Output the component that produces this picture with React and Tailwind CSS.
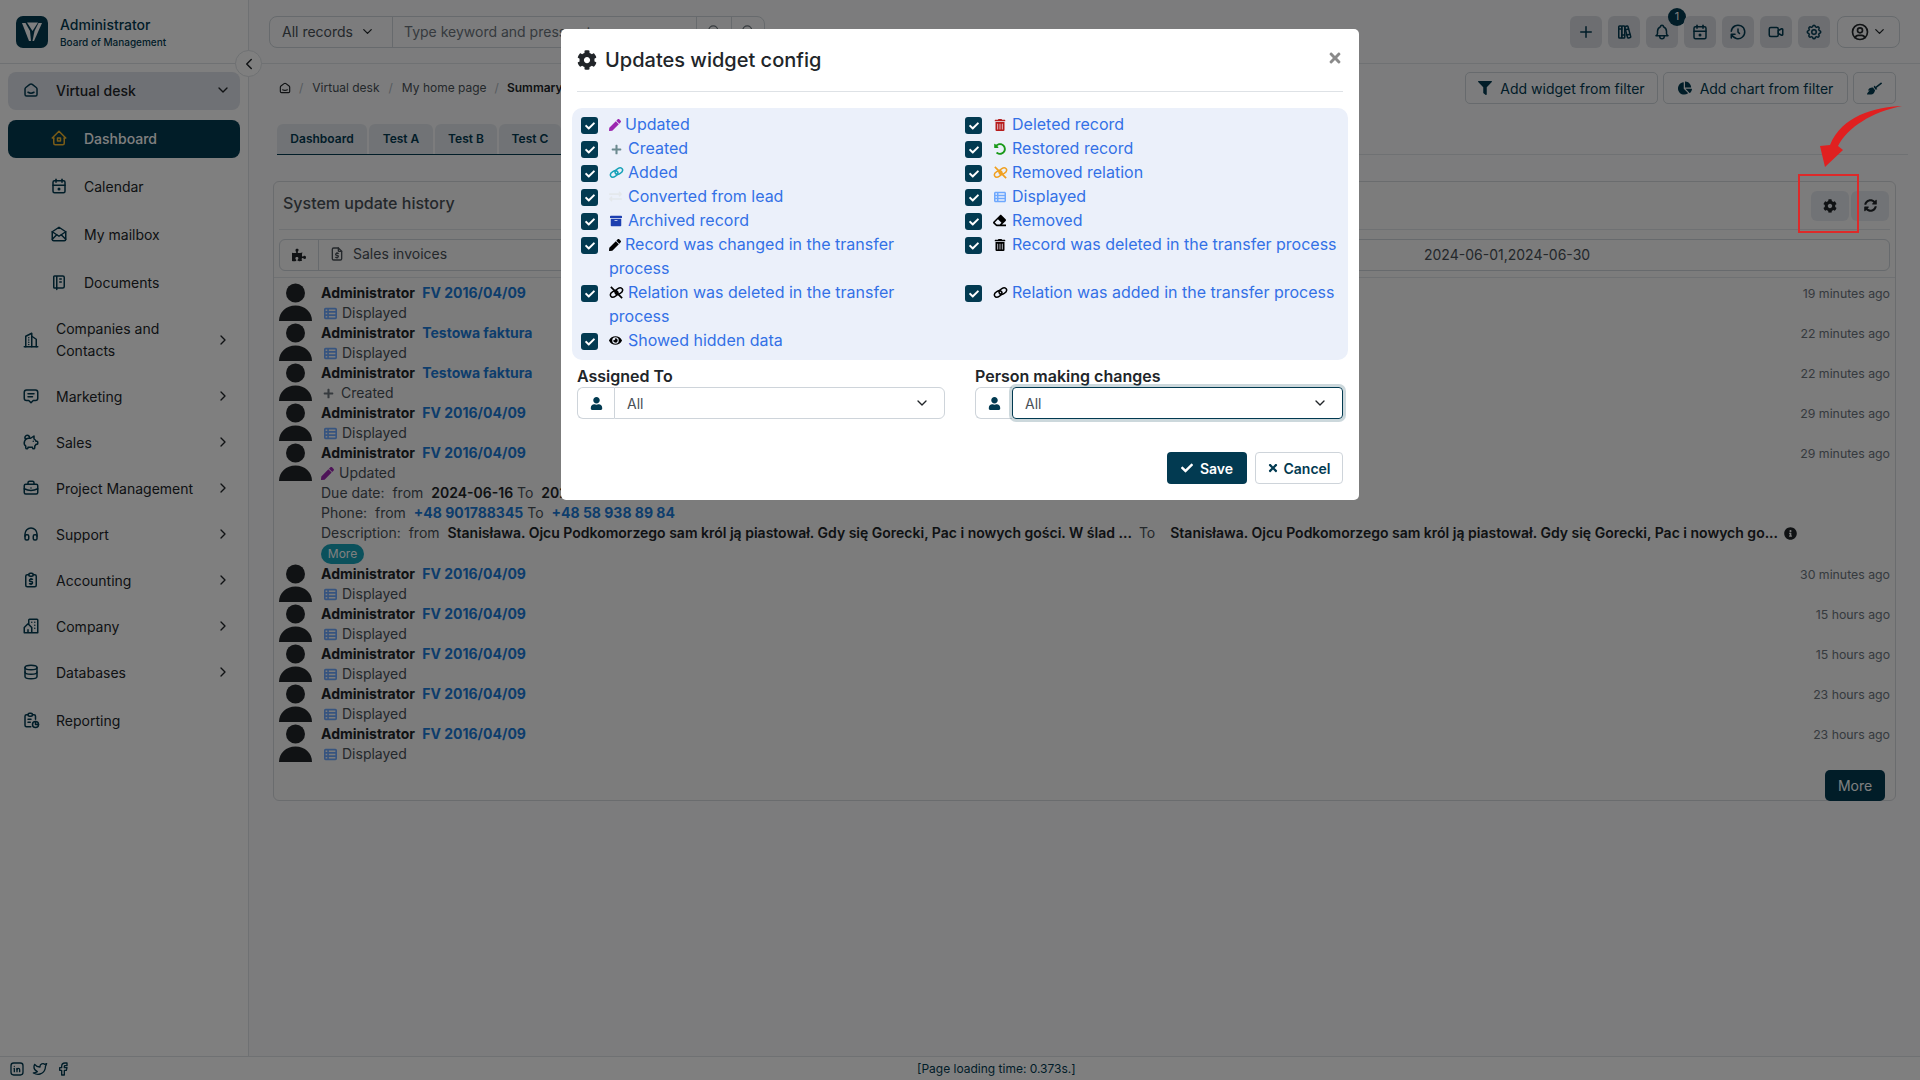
import {
  TbSmartHome, TbHome2, TbCalendarDue, TbMailOpened, TbNotebook, TbBuildingSkyscraper, TbMessage2, TbPigMoney,
  TbBriefcase, TbHeadphones, TbReportMoney, TbBuildingCommunity, TbDatabase, TbReport, TbChevronDown, TbChevronRight,
  TbChevronLeft, TbPlus, TbBooks, TbBell, TbHistory, TbVideo, TbSettings, TbUserCircle, TbSearch, TbFileDollar,
  TbBrandLinkedin, TbBrandTwitter, TbBrandFacebook,
} from 'react-icons/tb';
import {
  FaPen, FaPlus, FaExchangeAlt, FaArchive, FaEye, FaTrashAlt, FaUndoAlt, FaEraser, FaCog, FaFilter,
  FaChartPie, FaBroom, FaSyncAlt, FaInfoCircle, FaUser, FaCheck, FaTimes, FaPuzzlePiece,
} from 'react-icons/fa';
import { FaTableList } from 'react-icons/fa6';

const subItems = [
  { label: 'Calendar', Icon: TbCalendarDue },
  { label: 'My mailbox', Icon: TbMailOpened },
  { label: 'Documents', Icon: TbNotebook },
];

const navItems = [
  { label: 'Companies and Contacts', Icon: TbBuildingSkyscraper, tall: true },
  { label: 'Marketing', Icon: TbMessage2 },
  { label: 'Sales', Icon: TbPigMoney },
  { label: 'Project Management', Icon: TbBriefcase },
  { label: 'Support', Icon: TbHeadphones },
  { label: 'Accounting', Icon: TbReportMoney },
  { label: 'Company', Icon: TbBuildingCommunity },
  { label: 'Databases', Icon: TbDatabase },
];

const headerIcons = [TbPlus, TbBooks, TbBell, TbCalendarDue, TbHistory, TbVideo, TbSettings];

const updates = [
  { link: 'FV 2016/04/09', kind: 'displayed', time: '19 minutes ago' },
  { link: 'Testowa faktura', kind: 'displayed', time: '22 minutes ago' },
  { link: 'Testowa faktura', kind: 'created', time: '22 minutes ago' },
  { link: 'FV 2016/04/09', kind: 'displayed', time: '29 minutes ago' },
  { link: 'FV 2016/04/09', kind: 'updated', time: '29 minutes ago', details: true },
  { link: 'FV 2016/04/09', kind: 'displayed', time: '30 minutes ago' },
  { link: 'FV 2016/04/09', kind: 'displayed', time: '15 hours ago' },
  { link: 'FV 2016/04/09', kind: 'displayed', time: '15 hours ago' },
  { link: 'FV 2016/04/09', kind: 'displayed', time: '23 hours ago' },
  { link: 'FV 2016/04/09', kind: 'displayed', time: '23 hours ago' },
];

// the chain icons in the reference are two tilted ovals, no package has that shape
function Chain({ size = 15, className = '', broken = false }) {
  return (
    <svg width={size} height={size} viewBox="0 0 16 16" fill="none" stroke="currentColor" strokeWidth="1.600" className={className}>
      <ellipse cx="5.500" cy="9.500" rx="4.300" ry="2.800" transform="rotate(-32 5.500 9.500)" />
      <ellipse cx="10.500" cy="6.500" rx="4.300" ry="2.800" transform="rotate(-32 10.500 6.500)" />
      {broken && <path d="M2 2l12 12" strokeWidth="1.800" />}
    </svg>
  );
}

const options = [
  { label: 'Updated', Icon: FaPen, size: 12, color: 'text-[#9c27b0]', gap: 'mr-[4px]' },
  { label: 'Deleted record', Icon: FaTrashAlt, size: 12, color: 'text-[#b71c1c]', gap: 'ml-[1px] mr-[6px]' },
  { label: 'Created', Icon: FaPlus, size: 11, color: 'text-[#6c8a8f]', gap: 'ml-[2px] mr-[6px]' },
  { label: 'Restored record', Icon: FaUndoAlt, size: 12, color: 'text-[#1a9a1a]', gap: 'ml-[1px] mr-[6px]' },
  { label: 'Added', Icon: Chain, size: 15, color: 'text-[#17a2b8]', gap: 'mr-[4px]' },
  { label: 'Removed relation', Icon: Chain, broken: true, size: 15, color: 'text-[#f0a020]', gap: 'mr-[4px]' },
  { label: 'Converted from lead', Icon: FaExchangeAlt, size: 13, color: 'text-[#e4e8ec]', gap: 'mr-[6px]' },
  { label: 'Displayed', Icon: FaTableList, size: 12, color: 'text-[#6ea8fe]', gap: 'ml-[1px] mr-[6px]' },
  { label: 'Archived record', Icon: FaArchive, size: 12, color: 'text-[#1d3fb0]', gap: 'ml-[1px] mr-[6px]' },
  { label: 'Removed', Icon: FaEraser, size: 13, color: 'text-black', gap: 'mr-[6px]' },
  { label: 'Record was changed in the transfer process', Icon: FaPen, size: 12, color: 'text-black', gap: 'mr-[4px]' },
  { label: 'Record was deleted in the transfer process', Icon: FaTrashAlt, size: 12, color: 'text-black', gap: 'ml-[1px] mr-[6px]' },
  { label: 'Relation was deleted in the transfer process', Icon: Chain, broken: true, size: 15, color: 'text-black', gap: 'mr-[4px]' },
  { label: 'Relation was added in the transfer process', Icon: Chain, size: 15, color: 'text-black', gap: 'mr-[4px]' },
  { label: 'Showed hidden data', Icon: FaEye, size: 13, color: 'text-black', gap: 'mr-[6px]' },
];

function Logo() {
  return (
    <svg width="32" height="32" viewBox="0 0 32 32">
      <rect width="32" height="32" rx="7" fill="#023a51" />
      <path d="M6 7l7 18h2L14 15 9.500 7z" fill="#fff" />
      <path d="M11 6.500h11L16.500 15z" fill="#fff" />
      <path d="M26 7l-8 18h-1.500L18.500 15l4-8z" fill="#fff" />
    </svg>
  );
}

function Avatar() {
  return (
    <svg width="33" height="40" viewBox="0 0 33 40" className="shrink-0 text-[#212529]">
      <circle cx="16.500" cy="10" r="9.500" fill="currentColor" />
      <path d="M0 38c0-9 7-15.500 16.500-15.500S33 29 33 38z" fill="currentColor" />
    </svg>
  );
}

function SelectGroup({ focused }) {
  return (
    <div className="flex h-[32px] w-[368px]">
      <div className="flex w-[37px] items-center justify-center rounded-l-[6px] border border-r-0 border-[#ced4da] text-[#023a51]">
        <FaUser size={13} />
      </div>
      <div
        className={
          focused
            ? 'flex flex-1 items-center justify-between rounded-[4px] border border-[#023a51] pl-[12px] pr-[14px] shadow-[0_0_0_3px_rgba(2,58,81,0.2)]'
            : 'flex flex-1 items-center justify-between rounded-r-[6px] border border-[#ced4da] pl-[12px] pr-[14px]'
        }
      >
        <span className="text-[14px] text-[#495057]">All</span>
        <TbChevronDown size={16} className="text-[#212529]" />
      </div>
    </div>
  );
}

function UpdateRow({ item }) {
  return (
    <div className="flex pl-[5px] pr-[5px]">
      <Avatar />
      <div className="ml-[9px] flex-1 text-[14px] leading-[20px] text-[#495057]">
        <div className="font-bold text-[#212529]">
          Administrator <a className="ml-[4px] text-[#1b7bd8]">{item.link}</a>
        </div>
        {item.kind === 'displayed' && (
          <div className="flex items-center">
            <FaTableList size={13} className="ml-[3px] mr-[5px] text-[#6ea8fe]" />
            Displayed
          </div>
        )}
        {item.kind === 'created' && (
          <div className="flex items-center">
            <FaPlus size={11} className="ml-[2px] mr-[7px] text-[#6c757d]" />
            Created
          </div>
        )}
        {item.kind === 'updated' && (
          <div className="flex items-center">
            <FaPen size={13} className="mr-[5px] text-[#9c27b0]" />
            Updated
          </div>
        )}
        {item.details && (
          <>
            <div className="whitespace-pre">
              Due date:{'  '}from{'  '}<b className="font-semibold text-[#212529]">2024-06-16</b> To{'  '}<b className="font-semibold text-[#212529]">2024-06-30</b>
            </div>
            <div className="whitespace-pre">
              Phone:{'  '}from{'  '}<b className="font-bold text-[#1b7bd8]">+48 901788345</b> To{'  '}<b className="font-bold text-[#1b7bd8]">+48 58 938 89 84</b>
            </div>
            <div className="flex items-center whitespace-pre">
              Description:{'  '}from{'  '}
              <b className="font-semibold text-[#212529]">Stanisława. Ojcu Podkomorzego sam król ją piastował. Gdy się Gorecki, Pac i nowych gości. W ślad ...</b>
              <span className="ml-[7px] mr-[9px]">To</span>
              <b className="ml-[6px] font-semibold text-[#212529]">Stanisława. Ojcu Podkomorzego sam król ją piastował. Gdy się Gorecki, Pac i nowych go...</b>
              <FaInfoCircle size={13} className="ml-[6px] text-[#212529]" />
            </div>
            <span className="mt-[1px] block h-[20px] w-[43px] rounded-full bg-[#17a2b8] text-center text-[12px] leading-[20px] text-white">More</span>
          </>
        )}
      </div>
      <div className="pt-[1px] text-[12.3px] leading-[20px] text-[#6c757d]">{item.time}</div>
    </div>
  );
}

export default function App() {
  return (
    <div className="relative h-[1080px] w-[1920px] overflow-hidden bg-[#f8f9fa] font-['Inter',sans-serif] text-[#212529]">
      <div className="flex h-[1056px]">
        {/* sidebar */}
        <aside className="relative w-[249px] shrink-0 border-r border-[#dee2e6] bg-white">
          <div className="flex h-[64px] items-center border-b border-[#dee2e6] pl-[16px]">
            <Logo />
            <div className="ml-[12px] mt-[2px]">
              <div className="text-[14px] font-medium leading-[18px] text-[#023a51]">Administrator</div>
              <div className="text-[10px] font-medium leading-[16px] text-[#023a51]">Board of Management</div>
            </div>
          </div>
          <div className="absolute right-[-14px] top-[50px] flex h-[27px] w-[27px] items-center justify-center rounded-full border border-[#dee2e6] bg-white">
            <TbChevronLeft size={18} />
          </div>
          <nav className="flex flex-col px-[8px] pt-[8px] text-[14px] text-[#212529]">
            <div className="flex h-[38px] items-center rounded-[8px] bg-[#dfe3ea] pb-[2px] pl-[14px] pr-[9px] font-medium">
              <TbSmartHome size={18} className="mr-[16px] text-[#023a51]" />
              <span className="flex-1">Virtual desk</span>
              <TbChevronDown size={16} />
            </div>
            <div className="mt-[10px] flex h-[38px] items-center rounded-[8px] bg-[#023a51] pb-[2px] pl-[42px] font-medium text-white">
              <TbHome2 size={18} className="mr-[16px] text-[#f5b82e]" />
              Dashboard
            </div>
            {subItems.map(({ label, Icon }) => (
              <div key={label} className="mt-[10px] flex h-[38px] items-center pb-[2px] pl-[42px]">
                <Icon size={18} className="mr-[16px] text-[#023a51]" />
                {label}
              </div>
            ))}
            {navItems.map(({ label, Icon, tall }) => (
              <div key={label} className={tall ? 'mt-[8px] flex h-[60px] items-center pl-[14px] pr-[9px]' : 'mt-[8px] flex h-[38px] items-center pb-[2px] pl-[14px] pr-[9px]'}>
                <Icon size={18} className="mr-[16px] shrink-0 text-[#023a51]" />
                <span className={tall ? 'w-[120px] flex-1 pr-[30px] leading-[22px]' : 'flex-1'}>{label}</span>
                <TbChevronRight size={16} />
              </div>
            ))}
            <div className="mt-[10px] flex h-[38px] items-center pb-[2px] pl-[14px]">
              <TbReport size={18} className="mr-[16px] text-[#023a51]" />
              Reporting
            </div>
          </nav>
        </aside>

        {/* main */}
        <main className="min-w-0 flex-1">
          <header className="flex h-[64px] items-center justify-between border-b border-[#dee2e6] pl-[20px] pr-[20px]">
            <div className="flex h-[32px] w-[496px] rounded-[8px] border border-[#ced4da] text-[14px] text-[#6c757d]">
              <div className="flex w-[123px] items-center justify-between border-r border-[#ced4da] pl-[12px] pr-[17px] text-[#495057]">
                All records <TbChevronDown size={15} className="text-[#212529]" />
              </div>
              <div className="flex flex-1 items-center pl-[11px]">Type keyword and press enter</div>
              <div className="flex w-[35px] items-center justify-center border-l border-[#ced4da]"><TbSearch size={15} /></div>
              <div className="flex w-[33px] items-center justify-center border-l border-[#ced4da]"><TbSearch size={15} /></div>
            </div>
            <div className="flex items-center">
              {headerIcons.map((Icon, i) => (
                <div key={i} className="relative mr-[6px] flex h-[32px] w-[32px] items-center justify-center rounded-[6px] bg-[#dadde3] text-[#023a51]">
                  <Icon size={18} />
                  {i === 2 && (
                    <span className="absolute right-[-8px] top-[-8px] flex h-[18px] w-[18px] items-center justify-center rounded-full bg-[#023a51] text-[11px] text-white">1</span>
                  )}
                </div>
              ))}
              <div className="ml-[1px] flex h-[32px] w-[63px] items-center justify-center rounded-[8px] border border-[#ced4da] text-[#212529]">
                <TbUserCircle size={20} />
                <TbChevronDown size={15} className="ml-[2px]" />
              </div>
            </div>
          </header>

          <div className="pl-[24px] pr-[24px]">
            <div className="flex h-[60px] items-center justify-between pl-[4px]">
              <div className="mt-[-12px] flex items-center text-[12px] text-[#495057]">
                <TbSmartHome size={14} className="mr-[7px] ml-[1px] text-[#212529]" />
                <span className="text-[#adb5bd]">/</span>
                <span className="ml-[9px]">Virtual desk</span>
                <span className="mx-[9px] text-[#adb5bd]">/</span>
                <span>My home page</span>
                <span className="mx-[8px] text-[#adb5bd]">/</span>
                <span className="font-semibold text-[#212529]">Summary</span>
              </div>
              <div className="mt-[-12px] flex gap-[5px] text-[14px] text-[#023a51]">
                <div className="flex h-[32px] w-[193px] items-center justify-center gap-[8px] rounded-[5px] border border-[#ced4da]"><FaFilter size={14} />Add widget from filter</div>
                <div className="flex h-[32px] w-[185px] items-center justify-center gap-[8px] rounded-[5px] border border-[#ced4da]"><FaChartPie size={14} />Add chart from filter</div>
                <div className="flex h-[32px] w-[43px] items-center justify-center rounded-[5px] border border-[#ced4da]"><FaBroom size={15} /></div>
              </div>
            </div>

            <div className="mr-[-12px] ml-[4px] h-[31px] border-b border-[#dee2e6]">
              <div className="flex h-[31px] w-[300px] gap-[2px] border-b border-[#023a51] text-[12px] font-semibold text-[#023a51]">
                <div className="flex w-[90px] items-center justify-center rounded-t-[6px] bg-[#e3e6ec]">Dashboard</div>
                <div className="flex w-[64px] items-center justify-center rounded-t-[6px] bg-[#e3e6ec]">Test A</div>
                <div className="flex w-[62px] items-center justify-center rounded-t-[6px] bg-[#e3e6ec]">Test B</div>
                <div className="flex w-[62px] items-center justify-center rounded-t-[6px] bg-[#e3e6ec]">Test C</div>
              </div>
            </div>

            <section className="mt-[26px] h-[620px] rounded-[6px] border border-[#d5d8dc] bg-[#f8f8f8]">
              <div className="mx-[5px] flex h-[48px] items-center justify-between border-b border-[#dee2e6] pl-[4px] pr-[1px]">
                <h2 className="pb-[6px] text-[16px] font-medium text-[#495057]">System update history</h2>
                <div className="flex gap-[2px] text-[#212529]">
                  <div className="flex h-[30px] w-[38px] items-center justify-center rounded-[6px] bg-[#e3e6ec]"><FaCog size={14} /></div>
                  <div className="flex h-[30px] w-[38px] items-center justify-center rounded-[6px] bg-[#e3e6ec]"><FaSyncAlt size={13} /></div>
                </div>
              </div>
              <div className="mx-[5px] mt-[9px] flex h-[32px] rounded-[6px] border border-[#ced4da] text-[14px] text-[#495057]">
                <div className="flex w-[39px] items-center justify-center border-r border-[#ced4da] text-[#212529]"><FaPuzzlePiece size={14} /></div>
                <div className="flex w-[1105px] items-center pb-[3px] pl-[10px]">
                  <TbFileDollar size={16} className="mr-[8px]" />
                  Sales invoices
                </div>
                <div className="flex items-center pb-[1px]">2024-06-01,2024-06-30</div>
              </div>
              <div className="mt-[6px] border-t border-[#dee2e6] pt-[5px]">
                {updates.map((item, i) => (
                  <UpdateRow key={i} item={item} />
                ))}
              </div>
              <div className="mr-[10px] mt-[6px] flex justify-end">
                <div className="flex h-[31px] w-[60px] items-center justify-center rounded-[5px] bg-[#023a51] text-[14px] text-white">More</div>
              </div>
            </section>
          </div>
        </main>
      </div>

      <footer className="flex h-[24px] items-center border-t border-[#dee2e6] bg-white pl-[9px] text-[#023a51]">
        <div className="flex w-[917px] gap-[7px]">
          <TbBrandLinkedin size={16} />
          <TbBrandTwitter size={16} />
          <TbBrandFacebook size={16} />
        </div>
        <span className="ml-[-9px] text-[12px]">[Page loading time: 0.373s.]</span>
      </footer>

      {/* modal */}
      <div className="absolute inset-0 flex justify-center bg-black/50 pt-[29px]">
        <div className="h-[471px] w-[798px] rounded-[5px] bg-white">
          <div className="relative mx-[16px] flex h-[63px] items-center border-b border-[#dee2e6]">
            <FaCog size={20} className="mr-[8px] text-[#212529]" />
            <h1 className="text-[20px] font-medium text-[#212529]">Updates widget config</h1>
            <FaTimes size={16} className="absolute right-[0px] top-[21px] text-[#8a8a8a]" />
          </div>
          <div className="mx-[11px] mt-[16px] grid h-[252px] grid-cols-[384px_392px] content-start rounded-[10px] bg-[#ebf0fa] pt-[4px] text-[16px] leading-[24px] text-[#3370e6]">
            {options.map(({ label, Icon, size, color, gap, broken }, i) => (
              <div key={label} className="flex pl-[9px]">
                <span className="mt-[5px] flex h-[17px] w-[17px] shrink-0 items-center justify-center rounded-[3px] bg-[#023a51] text-white">
                  <FaCheck size={10} />
                </span>
                <div className={i % 2 === 0 ? 'ml-[11px] w-[338px]' : 'ml-[11px] w-[350px]'}>
                  {Icon === Chain ? (
                    <Chain size={size} broken={broken} className={`inline-block align-[-2px] ${color} ${gap}`} />
                  ) : (
                    <Icon size={size} className={`inline-block align-[-1px] ${color} ${gap}`} />
                  )}
                  {label}
                </div>
              </div>
            ))}
          </div>
          <div className="mx-[16px] mt-[5px] flex justify-between">
            <div>
              <div className="text-[16px] font-semibold leading-[22px]">Assigned To</div>
              <SelectGroup />
            </div>
            <div>
              <div className="text-[16px] font-semibold leading-[22px]">Person making changes</div>
              <SelectGroup focused />
            </div>
          </div>
          <div className="mx-[16px] mt-[33px] flex justify-end gap-[8px] text-[14px] font-semibold">
            <div className="flex h-[32px] w-[80px] items-center justify-center gap-[7px] rounded-[4px] bg-[#023a51] text-white">
              <FaCheck size={12} /> Save
            </div>
            <div className="flex h-[32px] w-[88px] items-center justify-center gap-[4px] rounded-[4px] border border-[#ced4da] text-[#023a51]">
              <FaTimes size={12} /> Cancel
            </div>
          </div>
        </div>
      </div>

      {/* annotation drawn on top of the shot */}
      <div className="absolute left-[1798px] top-[174px] h-[59px] w-[61px] border-2 border-[#dd2a2a]" />
      <svg className="absolute left-[1810px] top-[100px]" width="100" height="72" viewBox="0 0 100 72">
        <path d="M92 6C64 7 32 16 20 45L10 46 15 67 33 50 28 46C38 27 62 12 92 6Z" fill="#e02020" />
      </svg>
    </div>
  );
}
